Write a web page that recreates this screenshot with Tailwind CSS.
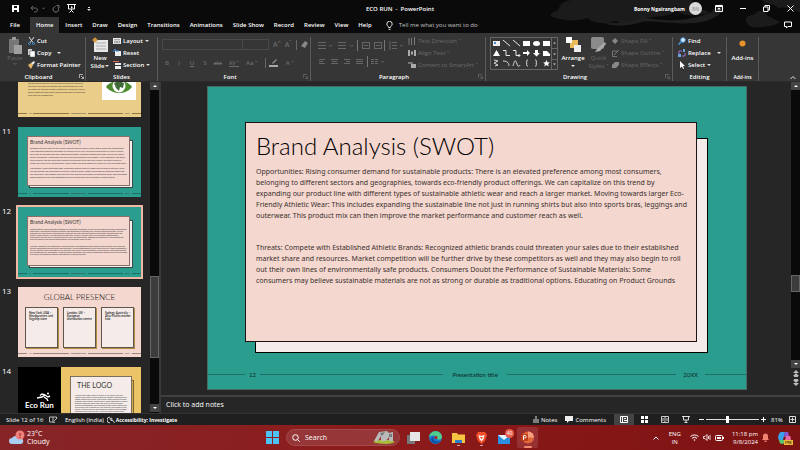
<!DOCTYPE html>
<html lang="en">
<head>
    <meta charset="UTF-8">
    <meta name="viewport" content="width=device-width, initial-scale=1.0">
    <title>ECO RUN - PowerPoint</title>
    <script src="https://cdn.jsdelivr.net/npm/@tailwindcss/browser@4"></script>
</head>
<body class="h-screen flex flex-col overflow-hidden bg-[#262626] text-white text-[6px] leading-[8px] font-semibold font-['Open_Sans',sans-serif]">

    <!-- Title bar and tabs -->
    <header class="relative bg-[#0a0a0a] shrink-0">
        <svg class="absolute right-0 top-0 w-[260px] h-[33px]" viewBox="0 0 260 33" fill="#1b1b1b">
            <path d="M10 16c2-5 8-4 9-8 1-5 8-8 13-8h120c2 8 12 10 18 12-12 5-26 4-34-1-10 8-24 4-34 8-8 6-20 6-26 2-12 4-24 2-28-3-12 4-24 3-38-2z"/>
            <path d="M60 20c12 6 26 2 44-3 20 5 44 5 68-5 3-5 6-8 10-9 6 10-12 20-30 20-20 2-40-4-54 0-14 4-32 4-38-3z" fill="#1f1f1f"/>
            <path d="M206 20c0-6 8-4 10-7 2-4 10-2 12 3l12 6c-6 5-14 4-18 5-8 2-16-1-16-7z"/>
            <path d="M222 0c4 6 12 2 16 8 8-2 14 2 22 4V0z"/>
        </svg>
        <div class="relative flex items-center h-[17px] px-3">
            <div class="flex-1 flex items-center gap-[7px]">
                <button aria-label="Save"><svg class="w-[7px] h-[7px]" viewBox="0 0 7 7"><path d="M0 0h7v7H0z" fill="#fff"/><path d="M2 1h3v2H2zM2 5h3v2H2z" fill="#111"/></svg></button>
                <button aria-label="Undo" class="flex items-center gap-1 ml-1"><svg class="w-2 h-2" viewBox="0 0 8 8" fill="none" stroke="#666"><path d="M3 1L1 3l2 2M1 3h4.500a2 2 0 0 1 0 4H4"/></svg><svg class="w-[3px] h-[3px]" viewBox="0 0 4 4"><path d="M0 1h4L2 3z" fill="#666"/></svg></button>
                <button aria-label="Redo"><svg class="w-2 h-2" viewBox="0 0 8 8" fill="none" stroke="#777"><path d="M6 2.500A2.800 2.800 0 1 1 3.500 1.500M4.500 0.500H7V3"/></svg></button>
                <button aria-label="Start slide show"><svg class="w-[9px] h-[9px]" viewBox="0 0 9 9" fill="none" stroke="#fff"><path d="M0 .5h9M1.500 1v4h6V1M4.500 5v2M2.500 8.500L4.500 6.500l2 2"/><path d="M4 2v2.500L6 3.200z" fill="#fff" stroke="none"/></svg></button>
                <button aria-label="Customize toolbar"><svg class="w-1 h-2 ml-1" viewBox="0 0 4 8" fill="#ddd"><path d="M1 2h2v1H1zM0 4h4L2 6z"/></svg></button>
            </div>
            <h1 class="text-[6px]">ECO RUN &nbsp;-&nbsp; PowerPoint</h1>
            <div class="flex-1 flex items-center justify-end">
                <span class="mr-1 text-[5px] font-bold">Bonny Ngairangbam</span>
                <span class="size-[13px] rounded-full bg-[#dadada] text-[#999] text-[5px] flex items-center justify-center mr-[13px]">BN</span>
                <button aria-label="Ribbon options" class="mr-[17px]"><svg class="w-2 h-[7px]" viewBox="0 0 8 7" fill="none" stroke="#fff"><path d="M.5 .5h7v6h-7zM.5 1.500h7M4 3v2.500M2.500 4.200L4 3l1.500 1.200"/></svg></button>
                <button aria-label="Minimize" class="mr-[17px]"><svg class="w-[6px] h-[7px]" viewBox="0 0 6 7" stroke="#fff"><path d="M0 3.500h6"/></svg></button>
                <button aria-label="Restore" class="mr-[17px]"><svg class="w-[7px] h-[7px]" viewBox="0 0 7 7" fill="none" stroke="#fff"><path d="M.5 2h4.500v4.500H.5zM2 2V.5h4.500V5H5"/></svg></button>
                <button aria-label="Close" class="-mr-[6px]"><svg class="w-[7px] h-[7px]" viewBox="0 0 7 7" stroke="#fff"><path d="M.5 .5l6 6M6.500 .5l-6 6"/></svg></button>
            </div>
        </div>
        <nav class="relative flex items-stretch gap-[2px] h-4 pl-[6px]">
            <button class="px-1">File</button>
            <button class="px-[6px] bg-[#363636] ml-1">Home</button>
            <button class="px-1">Insert</button>
            <button class="px-1">Draw</button>
            <button class="px-1">Design</button>
            <button class="px-1">Transitions</button>
            <button class="px-1">Animations</button>
            <button class="px-1">Slide Show</button>
            <button class="px-1">Record</button>
            <button class="px-1">Review</button>
            <button class="px-1">View</button>
            <button class="px-1">Help</button>
            <button class="px-1 ml-1 flex items-center gap-[6px] text-[#c4c4c4] font-normal">
                <svg class="w-[7px] h-[9px]" viewBox="0 0 7 9" fill="none" stroke="#ddd"><path d="M2.500 6.500C2.500 5 .8 4.800 .8 3a2.700 2.700 0 0 1 5.400 0c0 1.800-1.700 2-1.700 3.500zM2.500 8.300h2"/></svg>
                Tell me what you want to do
            </button>
            <button aria-label="Comments" class="ml-auto mr-[8px]"><svg class="w-[8px] h-[8px]" viewBox="0 0 8 8" fill="none" stroke="#fff"><path d="M.5 1h7v4.500H4L2.500 7V5.500h-2z"/></svg></button>
        </nav>
    </header>

    <!-- Ribbon -->
    <section class="flex shrink-0 h-[49px] bg-[#363636] border-b border-[#2b2b2b] pt-1">
        <div class="w-[86px] border-r border-[#5c5c5c] flex flex-col">
            <div class="flex-1 flex pl-[7px]">
                <button class="w-4 flex flex-col items-center text-[#666] font-normal">
                    <svg class="w-[14px] h-[17px] shrink-0" viewBox="0 0 14 17"><path d="M1 2h10v14H1z" fill="#777"/><path d="M4 0h4v3H4z" fill="#999"/><path d="M6 8h8v9H6z" fill="#a0a0a0"/></svg>
                    Paste
                    <svg class="w-1 h-1" viewBox="0 0 4 4" fill="none" stroke="#666"><path d="M.5 1L2 2.500 3.500 1"/></svg>
                </button>
                <div class="pl-[5px] flex flex-col gap-1">
                    <button class="flex items-center gap-[2px]"><svg class="w-[7px] h-2" viewBox="0 0 7 8" fill="none"><path d="M1 0l4 5.500M6 0L2 5.500" stroke="#ddd"/><circle cx="1.500" cy="6.500" r="1" stroke="#4a9ae0"/><circle cx="5.500" cy="6.500" r="1" stroke="#4a9ae0"/></svg>Cut</button>
                    <button class="flex items-center gap-[2px]"><svg class="w-[7px] h-2" viewBox="0 0 7 8"><path d="M0 0h4v6H0z" fill="#ccc"/><path d="M2 2h5v6H2z" fill="#fff" stroke="#555" stroke-width=".5"/></svg>Copy<svg class="w-1 h-1 ml-1" viewBox="0 0 4 4" fill="#ddd"><path d="M0 1h4L2 3z"/></svg></button>
                    <button class="flex items-center gap-[2px]"><svg class="w-[7px] h-2" viewBox="0 0 7 8"><path d="M0 4l3-2 2 2-2 4z" fill="#e9b96a"/><path d="M3 2l3-2 1 1-2 3z" fill="#eee"/></svg>Format Painter</button>
                </div>
            </div>
            <div class="h-[9px] flex items-center justify-center relative"><span class="pr-[8px]">Clipboard</span>
                <svg class="absolute right-[1px] w-[5px] h-[5px]" viewBox="0 0 5 5" fill="none" stroke="#ccc" stroke-width=".8"><path d="M.5 4V.5H4M2 2l2.500 2.500M4.500 2.500v2h-2"/></svg>
            </div>
        </div>

        <div class="w-[72px] border-r border-[#5c5c5c] flex flex-col">
            <div class="flex-1 flex pl-[4px]">
                <button class="w-5 flex flex-col items-center">
                    <svg class="w-4 h-[16px] shrink-0 mb-px" viewBox="0 0 16 16"><path d="M2 3h14v12H2z" fill="#e8e8e8"/><path d="M4 6h10M4 9h10M4 12h10" stroke="#aaa"/><circle cx="3" cy="3" r="2" fill="#e9a94a"/><path d="M3 0v6M0 3h6" stroke="#c98a35" stroke-width=".8"/></svg>
                    New
                    <span class="flex items-center gap-px">Slide<svg class="w-1 h-1" viewBox="0 0 4 4" fill="#ddd"><path d="M0 1h4L2 3z"/></svg></span>
                </button>
                <div class="pl-[3px] flex flex-col gap-1">
                    <button class="flex items-center gap-[2px]"><svg class="w-2 h-2" viewBox="0 0 8 8"><path d="M0 1h8v6H0z" fill="#eee"/><path d="M1 2.500h6M1.500 4h2v2h-2zM4.500 4h2v2h-2z" fill="none" stroke="#888" stroke-width=".7"/></svg>Layout<svg class="w-1 h-1" viewBox="0 0 4 4" fill="#ddd"><path d="M0 1h4L2 3z"/></svg></button>
                    <button class="flex items-center gap-[2px]"><svg class="w-2 h-2" viewBox="0 0 8 8"><path d="M2 2h6v5H2z" fill="#eee"/><path d="M0 3l2-3 1 2h3" fill="none" stroke="#3f8fe0"/></svg>Reset</button>
                    <button class="flex items-center gap-[2px]"><svg class="w-2 h-2" viewBox="0 0 8 8"><path d="M0 0h6v1H0z" fill="#e06a50"/><path d="M2 2h6v2H2zM2 5h6v3H2z" fill="#eee"/></svg>Section<svg class="w-1 h-1" viewBox="0 0 4 4" fill="#ddd"><path d="M0 1h4L2 3z"/></svg></button>
                </div>
            </div>
            <div class="h-[9px] flex items-center justify-center">Slides</div>
        </div>

        <div class="w-[153px] border-r border-[#5c5c5c] flex flex-col">
            <div class="flex-1 flex flex-col gap-2 pl-[4px] pt-[2px] text-[#6a6a6a]">
                <div class="flex items-center">
                    <input aria-label="Font" class="w-[81px] h-[11px] border border-[#4a4a4a] bg-transparent">
                    <input aria-label="Font size" class="w-[26px] h-[11px] border border-l-0 border-[#4a4a4a] bg-transparent">
                    <button class="pl-1 text-[7px]">A<sup>^</sup></button>
                    <button class="pl-[4px] text-[7px]">A<sup>ˇ</sup></button>
                    <i class="w-px h-[10px] bg-[#666] mx-1"></i>
                    <button aria-label="Clear formatting" class="shrink-0"><svg class="w-[7px] h-2" viewBox="0 0 7 8"><path d="M0 5l4-5 3 2-3 5z" fill="#888"/></svg></button>
                </div>
                <div class="flex items-center gap-[7px] pl-[3px]">
                    <button>B</button><button class="italic pl-[2px]">I</button><button class="underline pl-[3px]">U</button><button class="pl-[2px]">S</button>
                    <button class="line-through text-[5px]">abc</button>
                    <button class="text-[5px] underline">AV ˇ</button>
                    <button>Aa ˇ</button>
                    <i class="w-px h-[10px] bg-[#666]"></i>
                    <button aria-label="Highlight" class="-ml-1"><svg class="w-[10px] h-2" viewBox="0 0 10 8"><path d="M3 4l4-4 1 1-4 4z" fill="#888"/><path d="M0 6h9v2H0z" fill="#aaa"/></svg></button>
                    <button>A ˇ</button>
                </div>
            </div>
            <div class="h-[9px] flex items-center justify-center relative"><span class="pr-[8px]">Font</span>
                <svg class="absolute right-[2px] w-[5px] h-[5px]" viewBox="0 0 5 5" fill="none" stroke="#666" stroke-width=".8"><path d="M.5 4V.5H4M2 2l2.500 2.500M4.500 2.500v2h-2"/></svg>
            </div>
        </div>

        <div class="w-[175px] border-r border-[#5c5c5c] flex flex-col">
            <div class="flex-1 flex pl-[6px]">
                <svg class="w-[91px] h-[32px]" viewBox="0 0 91 32" fill="none" stroke="#666">
                    <path d="M1 5.500h8M1 8.500h8M1 11.500h8M12 8l1.500 1.500L15 8M21 5.500h8M21 8.500h8M21 11.500h8M33 8l1.500 1.500L36 8"/>
                    <path d="M40.500 3v11M67.500 3v11M50.500 19v11" stroke="#777"/>
                    <path d="M45.500 5v7M52.500 5v7M45 5.500h8M45 11.500h8M47 8.500h4M57.500 5v7M64.500 5v7M57 5.500h8M57 11.500h8M59 8.500h4M73 4v9M75 5.500h5M75 8.500h5M75 11.500h5M83 8l1.500 1.500L86 8"/>
                    <path d="M2 22.500h6M2 24.500h4M2 26.500h6M14 22.500h7M15 24.500h5M14 26.500h7M27 22.500h6M29 24.500h4M27 26.500h6M39 22.500h7M39 24.500h7M39 26.500h7M54 22.500h3M54 24.500h3M54 26.500h3M58 22.500h3M58 24.500h3M58 26.500h3M64 24l1.500 1.500L67 24"/>
                </svg>
                <div class="flex flex-col gap-1 text-[#6c6c6c] font-normal whitespace-nowrap">
                    <button class="flex items-center gap-[2px]"><svg class="w-2 h-2" viewBox="0 0 8 8" stroke="#777"><path d="M1 1v7M3.500 1v7M6.500 0v8"/></svg>Text Direction ˇ</button>
                    <button class="flex items-center gap-[2px]"><svg class="w-2 h-2" viewBox="0 0 8 8"><path d="M0 1h2v6H0zM6 1h2v6H6zM3 2.500h2v3H3z" fill="#aaa"/></svg>Align Text ˇ</button>
                    <button class="flex items-center gap-[2px]"><svg class="w-2 h-2" viewBox="0 0 8 8"><path d="M0 1h5v2H0z" fill="#777"/><path d="M3 3h5v4H3z" fill="#aaa"/></svg>Convert to SmartArt ˇ</button>
                </div>
            </div>
            <div class="h-[9px] flex items-center justify-center relative"><span class="pr-[8px]">Paragraph</span>
                <svg class="absolute right-[2px] w-[5px] h-[5px]" viewBox="0 0 5 5" fill="none" stroke="#666" stroke-width=".8"><path d="M.5 4V.5H4M2 2l2.500 2.500M4.500 2.500v2h-2"/></svg>
            </div>
        </div>

        <div class="w-[187px] border-r border-[#5c5c5c] flex flex-col">
            <div class="flex-1 flex pl-[4px]">
                <!-- Shape gallery -->
                <svg class="w-[69px] h-[33px] shrink-0" viewBox="0 0 69 33" fill="none" stroke="#e8e8e8">
                    <path d="M.5 .5h67v32H.5zM61.500 0v33M61 11.500h7M61 22.500h7" stroke="#666"/>
                    <path d="M3 4h7v5H3z" fill="#eee" stroke="none"/><path d="M4 5h2v2H4z" fill="#4a8ad0" stroke="none"/>
                    <path d="M13 3l7 6M23 3l7 6"/>
                    <path d="M33 4h7v5h-7zM53 4h7v5h-7z" fill="#fff" stroke="none"/><ellipse cx="46.500" cy="6.500" rx="3.500" ry="2.500" fill="#fff" stroke="none"/>
                    <path d="M6.500 13l3.500 6H3z" fill="#fff" stroke="none"/>
                    <path d="M13 13.500h3v5h4M23 13.500h3v5h4M28.500 17l1.500 1.500-1.500 1.500" />
                    <path d="M33 15h4v-2l3 3-3 3v-2h-4zM45 13h3v3h2l-3.500 3.500L43 16h2zM53 14h4l3 3v2h-7z" fill="#fff" stroke="none"/>
                    <path d="M4 23l4 1-4 2 4 2-3 1M13 24c3 0 6 1 6 5M23 29c2-8 3-5 4-2s2 3 3 1M38 23c-3 0 0 3-2 3 2 0-1 3 2 3M45 23c3 0 0 3 2 3-2 0 1 3-2 3" stroke-width=".9"/>
                    <path d="M56.500 23l1 2.200 2.400.2-1.800 1.600.6 2.400-2.200-1.300-2.200 1.300.6-2.400-1.800-1.600 2.400-.2z" fill="#fff" stroke="none"/>
                    <path d="M63 6.500h3l-1.500-1.500zM63 16.500h3l-1.500 1.500zM63 26.500h3l-1.500 1.500z" fill="#ccc" stroke="none"/>
                </svg>
                <button class="w-[28px] flex flex-col items-center">
                    <svg class="w-[15px] h-[15px] shrink-0" viewBox="0 0 15 15"><path d="M4 3h8v8H4z" fill="#e9b95a"/><path d="M0 0h6v6H0z" fill="#fff"/><path d="M8 8h7v7H8z" fill="#eee"/></svg>
                    <span class="mt-[2px]">Arrange</span>
                    <svg class="w-1 h-1 mt-[2px]" viewBox="0 0 4 4" fill="#eee"><path d="M0 1h4L2 3z"/></svg>
                </button>
                <button class="w-[23px] flex flex-col items-center text-[#686868] font-normal whitespace-nowrap">
                    <svg class="w-4 h-[15px] shrink-0" viewBox="0 0 16 15"><rect width="13" height="12" rx="2" fill="#8a8a8a"/><path d="M6 12l8-7 1 2-6 7-5 1z" fill="#aaa"/></svg>
                    <span class="mt-[2px]">Quick</span><span>Styles ˇ</span>
                </button>
                <div class="pl-[2px] flex flex-col gap-1 text-[#686868] font-normal whitespace-nowrap">
                    <button class="flex items-center gap-[2px]"><svg class="w-[7px] h-2" viewBox="0 0 7 8"><path d="M0 4l3-3 3 3-3 3z" fill="#888"/></svg>Shape Fill ˇ</button>
                    <button class="flex items-center gap-[2px]"><svg class="w-[7px] h-2" viewBox="0 0 7 8" fill="none" stroke="#777"><path d="M5 2H.5v5.500H5M2 6l5-5"/></svg>Shape Outline ˇ</button>
                    <button class="flex items-center gap-[2px]"><svg class="w-[7px] h-2" viewBox="0 0 7 8"><path d="M0 4l3-3h4v3L4 7H0z" fill="#888"/></svg>Shape Effects ˇ</button>
                </div>
            </div>
            <div class="h-[9px] flex items-center justify-center relative"><span class="pr-[8px]">Drawing</span>
                <svg class="absolute right-[2px] w-[5px] h-[5px]" viewBox="0 0 5 5" fill="none" stroke="#666" stroke-width=".8"><path d="M.5 4V.5H4M2 2l2.500 2.500M4.500 2.500v2h-2"/></svg>
            </div>
        </div>

        <div class="w-[54px] border-r border-[#5c5c5c] flex flex-col">
            <div class="flex-1 flex flex-col gap-1 pl-[5px]">
                <button class="flex items-center gap-[2px]"><svg class="w-2 h-2" viewBox="0 0 8 8" fill="none"><circle cx="5" cy="3" r="2.300" fill="#dceeff" stroke="#4a9ae0"/><path d="M3.300 4.700L.5 7.500" stroke="#4a9ae0" stroke-width="1.500"/></svg>Find</button>
                <button class="flex items-center gap-[2px]"><svg class="w-2 h-2" viewBox="0 0 8 8" fill="none"><path d="M1 5V2h3M7 4v3H4" stroke="#a070c8"/><path d="M5 0h2v3H5zM0 5h3v3H0z" fill="#6aa5e0"/></svg>Replace<svg class="w-1 h-1 ml-1" viewBox="0 0 4 4" fill="#ddd"><path d="M0 1h4L2 3z"/></svg></button>
                <button class="flex items-center gap-[2px]"><svg class="w-2 h-2" viewBox="0 0 8 8"><path d="M2 0l5 5H5l1 2.500-1 .5-1-2.500L2 7z" fill="#fff"/></svg>Select<svg class="w-1 h-1" viewBox="0 0 4 4" fill="#ddd"><path d="M0 1h4L2 3z"/></svg></button>
            </div>
            <div class="h-[9px] flex items-center justify-center">Editing</div>
        </div>

        <div class="w-[32px] border-r border-[#5c5c5c] flex flex-col items-center">
            <button class="flex-1 flex flex-col items-center gap-[7px] pt-[3px]">
                <svg class="w-[7px] h-[7px]" viewBox="0 0 7 7"><circle cx="3.500" cy="3.500" r="3" fill="#e8912a"/></svg>
                Add-ins
            </button>
            <div class="h-[9px] flex items-center text-[5px]">Add-ins</div>
        </div>
        <button aria-label="Collapse ribbon" class="ml-auto mr-1 mb-px self-end"><svg class="w-[6px] h-[5px]" viewBox="0 0 6 5" fill="none" stroke="#ddd"><path d="M.5 4L3 1.500 5.500 4"/></svg></button>
    </section>

    <div class="flex-1 min-h-0 flex">
        <!-- Thumbnails -->
        <aside class="w-[161px] shrink-0 flex border-r-2 border-[#3a3a3a]">
            <ol class="flex-1 min-w-0 flex flex-col gap-[10px] overflow-hidden font-['Lato',sans-serif] text-[#333] font-normal">
                <li class="flex h-[35px] shrink-0 items-end pl-[18px]">
                    <div class="w-[123px] h-[35px] bg-[#e9cd88] flex flex-col">
                        <div class="flex-1 flex justify-between pl-[10px] pr-[5px]">
                            <p class="w-[58px] text-[2px] leading-[3px]">and the idea driving every pair of shoes we make for runners in the world. Our shoes are sourced from recycled materials, with low water use and clean energy, so that every runner may leave a smaller footprint on the planet. Eco Run gives back to nature with each and every product sold.</p>
                            <svg class="w-[34px] h-[18px]" viewBox="0 0 34 18"><path d="M0 0h34v18H0z" fill="#fff"/><path d="M4 5C9-3 25-3 30 5c-6 8-19 8-26 0z" fill="#4b8a2c"/><circle cx="17" cy="4" r="6.500" fill="#fff"/><path d="M12 1l5-2 5 2-1 5-3-1-1 4-3-3z" fill="#3f6b38"/></svg>
                        </div>
                        <div class="flex items-center gap-[2px] h-2 text-[2px] leading-[2px]"><i class="w-[9px] h-px bg-[#8f7a3f]"></i>10<i class="flex-1 h-px bg-[#8f7a3f]"></i>Presentation title<i class="flex-1 h-px bg-[#8f7a3f]"></i>20XX<i class="w-[9px] h-px bg-[#8f7a3f]"></i></div>
                    </div>
                </li>
                <li class="flex shrink-0">
                    <span class="w-[18px] pl-[2px] text-white text-[8px] leading-[8px] font-['Open_Sans',sans-serif]">11</span>
                    <div class="w-[123px] h-[70px] bg-[#2b9d8f] flex flex-col">
                        <div class="relative isolate ml-[9px] mr-[11px] mt-[9px] h-[50px]">
                            <div class="absolute -z-10 left-[2px] -right-[3px] top-1 -bottom-[2px] bg-[#f5ece9] border border-[#3a4a48]"></div>
                            <div class="h-full bg-[#f4d7cf] border border-[#8a6f6a] px-[2px] pt-px">
                                <h3 class="text-[5px] leading-[8px]">Brand Analysis (SWOT)</h3>
                                <p class="text-[2px] leading-[3px] pt-px">Strengths: Diverse variety of eco-friendly products: Eco Run offers a wide range of shoes and clothing made from sustainable materials that appeal to runners of every level. The brand keeps prices fair while it follows strict rules on sourcing and waste. Strong brand identity: customers associate the name with care for nature, quality and comfort. Partnerships with local clubs and events give the company a loyal community and steady word of mouth, and the online store reaches new markets at low cost every season. The team is skilled in design and in the use of recycled fibres, natural rubber and plant based dyes, which few rivals can match today.</p>
                                <p class="text-[2px] leading-[3px] pt-[2px]">Weaknesses: Higher production costs: Sustainable materials and fair wages raise the cost of each pair, which can limit margins and keep some buyers away from the brand. Limited retail presence: most sales come from the online store, and shoppers who wish to try the shoes on may choose an established brand. Small marketing budget compared with large competitors makes it hard to reach new customers in distant regions.</p>
                            </div>
                        </div>
                        <div class="mt-auto mb-[3px] flex items-center gap-[2px] text-[2px] leading-[2px]"><i class="w-[9px] h-px bg-[#1c7067]"></i>11<i class="flex-1 h-px bg-[#1c7067]"></i>Presentation title<i class="flex-1 h-px bg-[#1c7067]"></i>20XX<i class="w-[9px] h-px bg-[#1c7067]"></i></div>
                    </div>
                </li>
                <li class="flex shrink-0">
                    <span class="w-[18px] pl-[2px] text-white text-[8px] leading-[8px] font-['Open_Sans',sans-serif]">12</span>
                    <div class="w-[123px] h-[70px] bg-[#2b9d8f] outline-2 outline-[#f0b8a4] flex flex-col">
                        <div class="relative isolate ml-[9px] mr-[11px] mt-[9px] h-[50px]">
                            <div class="absolute -z-10 left-[2px] -right-[3px] top-1 -bottom-[2px] bg-[#f5ece9] border border-[#3a4a48]"></div>
                            <div class="h-full bg-[#f4d7cf] border border-[#8a6f6a] px-[2px] pt-px">
                                <h3 class="text-[5px] leading-[8px]">Brand Analysis (SWOT)</h3>
                                <p class="text-[2px] leading-[2px] pt-[2px]">Opportunities: Rising consumer demand for sustainable products: There is an elevated preference among most consumers, belonging to different sectors and geographies, towards eco-friendly product offerings. We can capitalize on this trend by expanding our product line with different types of sustainable athletic wear and reach a larger market. Moving towards larger Eco-Friendly Athletic Wear: This includes expanding the sustainable line not just in running shirts but also into sports bras, leggings and outerwear. This product mix can then improve the market performance and customer reach as well.</p>
                                <p class="text-[2px] leading-[2px] pt-[5px]">Threats: Compete with Established Athletic Brands: Recognized athletic brands could threaten your sales due to their established market share and resources. Market competition will be further drive by these competitors as well and they may also begin to roll out their own lines of environmentally safe products. Consumers Doubt the Performance of Sustainable Materials: Some consumers may believe sustainable materials are not as strong or durable as traditional options. Educating on Product Grounds</p>
                            </div>
                        </div>
                        <div class="mt-auto mb-[3px] flex items-center gap-[2px] text-[2px] leading-[2px]"><i class="w-[9px] h-px bg-[#1c7067]"></i>12<i class="flex-1 h-px bg-[#1c7067]"></i>Presentation title<i class="flex-1 h-px bg-[#1c7067]"></i>20XX<i class="w-[9px] h-px bg-[#1c7067]"></i></div>
                    </div>
                </li>
                <li class="flex shrink-0">
                    <span class="w-[18px] pl-[2px] text-white text-[8px] leading-[8px] font-['Open_Sans',sans-serif]">13</span>
                    <div class="w-[123px] h-[70px] bg-[#f4d7cf] flex flex-col">
                        <h3 class="text-center text-[8px] leading-[10px] pt-[5px] font-light text-black">GLOBAL PRESENCE</h3>
                        <div class="mt-[5px] px-[7px] grid grid-cols-3 gap-[5px] text-[3px] leading-[3px] font-bold">
                            <div class="h-[41px] bg-[#f5ece9] border border-[#5e554d] shadow-[1px_1px_0_#b08f45] pl-[3px] pt-1">New York, USA – Headquarters and flagship store</div>
                            <div class="h-[41px] bg-[#f5ece9] border border-[#5e554d] shadow-[1px_1px_0_#b08f45] pl-[3px] pt-1">London, UK – European distribution centre</div>
                            <div class="h-[41px] bg-[#f5ece9] border border-[#5e554d] shadow-[1px_1px_0_#b08f45] pl-[3px] pt-1">Sydney, Australia – Asia-Pacific market hub</div>
                        </div>
                        <div class="mt-auto mb-[3px] flex items-center gap-[2px] text-[2px] leading-[2px]"><i class="w-[9px] h-px bg-[#9b8883]"></i>13<i class="flex-1 h-px bg-[#9b8883]"></i>Presentation title<i class="flex-1 h-px bg-[#9b8883]"></i>20XX<i class="w-[9px] h-px bg-[#9b8883]"></i></div>
                    </div>
                </li>
                <li class="flex shrink-0">
                    <span class="w-[18px] pl-[2px] text-white text-[8px] leading-[8px] font-['Open_Sans',sans-serif]">14</span>
                    <div class="w-[123px] h-[70px] bg-[#ecc468] flex">
                        <div class="w-[43px] bg-black text-white text-[8px] leading-[8px] font-bold text-center pt-[25px]">
                            <svg class="w-[16px] h-[9px] ml-[18px]" viewBox="0 0 16 9" fill="none" stroke="#fff" stroke-width="1.400"><circle cx="12" cy="1.500" r="1" fill="#fff" stroke="none"/><path d="M1 6l5-1 3-2 3 2 2-1M9 3L6 2 4 3.500M8 5l3 2 1 2"/></svg>
                            <span class="block">Eco Run</span>
                        </div>
                        <div class="relative isolate flex-1 ml-[9px] mr-[9px] mt-[9px] h-[54px]">
                            <div class="absolute -z-10 left-[2px] -right-[2px] top-1 -bottom-[2px] bg-[#d7ab4d] border border-[#7c6533]"></div>
                            <div class="h-full bg-[#f5ece9] border border-[#7c6f5c] pl-1 pr-[3px] pt-1">
                                <h3 class="text-[7px] leading-[9px] pl-[2px]">THE LOGO</h3>
                                <p class="text-[2px] leading-[2px] pt-[4px]">The Eco Run logo shows a runner in full stride over the name of the brand, which stands for motion, freedom and a lighter step on the earth. The runner leans forward to show progress and energy, and the plain white lettering on a black ground keeps the mark bold and easy to read on shoes, shirts and packaging. The rounded shapes recall nature and the circular use of materials. The logo can be printed in one colour, which saves ink and keeps the waste of the printing process as low as it can be. It works at small sizes and on screens, and it is the same in every market in which the company sells its products, so that customers know it at once wherever they happen to run.</p>
                            </div>
                        </div>
                    </div>
                </li>
            </ol>
            <div class="w-[9px] bg-[#0a0a0a] flex flex-col">
                <button aria-label="Scroll up" class="h-2 bg-[#444] flex items-center justify-center"><svg class="w-1 h-1" viewBox="0 0 4 4" fill="#fff"><path d="M0 3h4L2 1z"/></svg></button>
                <div class="mt-[186px] h-[82px] bg-[#3c3c3c] border border-[#666]"></div>
                <button aria-label="Scroll down" class="mt-auto h-2 bg-[#444] mb-px flex items-center justify-center"><svg class="w-1 h-1" viewBox="0 0 4 4" fill="#fff"><path d="M0 1h4L2 3z"/></svg></button>
            </div>
        </aside>

        <main class="flex-1 min-w-0 flex flex-col">
            <div class="flex">
                <div class="flex-1 min-w-0 pl-[46px] pr-[44px] pt-1 pb-[5px]">
                    <!-- Current slide -->
                    <article class="aspect-video bg-[#2b9d8f] text-black flex flex-col border border-[#4a6a66]">
                        <div class="relative isolate ml-[37px] mr-[49px] mt-[35px] h-[220px]">
                            <div class="absolute -z-10 left-[10px] -right-[11px] top-4 -bottom-[11px] bg-[#f5ece9] border border-black"></div>
                            <div class="h-full bg-[#f4d7cf] border border-[#1c1412] pl-[10px] pt-2">
                                <h2 class="text-[24px] leading-[30px] font-light font-['Lato',sans-serif]">Brand Analysis (SWOT)</h2>
                                <div class="pt-[5px] text-[7px] leading-[11px] font-normal text-[#3a302e] whitespace-nowrap font-['Noto_Sans','Open_Sans',sans-serif]">
                                    <p>Opportunities: Rising consumer demand for sustainable products: There is an elevated preference among most consumers,<br>belonging to different sectors and geographies, towards eco-friendly product offerings. We can capitalize on this trend by<br>expanding our product line with different types of sustainable athletic wear and reach a larger market. Moving towards larger Eco-<br>Friendly Athletic Wear: This includes expanding the sustainable line not just in running shirts but also into sports bras, leggings and<br>outerwear. This product mix can then improve the market performance and customer reach as well.</p>
                                    <p class="pt-[21px]">Threats: Compete with Established Athletic Brands: Recognized athletic brands could threaten your sales due to their established<br>market share and resources. Market competition will be further drive by these competitors as well and they may also begin to roll<br>out their own lines of environmentally safe products. Consumers Doubt the Performance of Sustainable Materials: Some<br>consumers may believe sustainable materials are not as strong or durable as traditional options. Educating on Product Grounds</p>
                                </div>
                            </div>
                        </div>
                        <footer class="mt-auto mb-[10px] flex items-center text-[6px] leading-[8px] font-normal font-['Lato',sans-serif] text-[#0c2b28]">
                            <i class="w-[37px] h-px bg-[#1c7067]"></i><span class="px-1">12</span>
                            <i class="flex-[13] h-px bg-[#1c7067]"></i><span class="px-[9px]">Presentation title</span>
                            <i class="flex-[12] h-px bg-[#1c7067]"></i><span class="px-[7px]">20XX</span><i class="w-[41px] h-px bg-[#1c7067]"></i>
                        </footer>
                    </article>
                </div>
                <div class="w-[9px] shrink-0 bg-[#0a0a0a] flex flex-col items-stretch">
                    <button aria-label="Previous" class="h-2 bg-[#444] flex items-center justify-center"><svg class="w-1 h-1" viewBox="0 0 4 4" fill="#fff"><path d="M0 3h4L2 1z"/></svg></button>
                    <div class="mt-[185px] h-[17px] bg-[#3c3c3c] border border-[#666]"></div>
                    <button aria-label="Next" class="mt-auto h-2 bg-[#444] flex items-center justify-center"><svg class="w-1 h-1" viewBox="0 0 4 4" fill="#fff"><path d="M0 1h4L2 3z"/></svg></button>
                    <div class="h-[27px] bg-[#262626] flex justify-center pt-[2px]"><svg class="w-[6px] h-[16px]" viewBox="0 0 6 16" fill="#bbb"><path d="M0 3h6L3 0zM0 6h6L3 3zM1 6h4v1H1zM0 10h6l-3 3zM0 13h6l-3 3zM1 9h4v1H1z"/></svg></div>
                </div>
            </div>
            <section class="flex-1 border-t-2 border-[#404040] pl-[5px] pt-[3px] text-[7px] leading-[10px] font-medium">Click to add notes</section>
        </main>
    </div>

    <!-- Status bar -->
    <footer class="h-3 shrink-0 bg-[#1f1f1f] border-t border-[#333] flex items-center pl-[6px] pr-1 text-[6px] font-medium">
        <span class="w-[43px]">Slide 12 of 16</span>
        <svg class="w-2 h-[7px] mr-2" viewBox="0 0 8 7" fill="none" stroke="#ddd" stroke-width=".8"><path d="M4 1v5.500M4 1H.5v5H4l2 .5M4 1h3.500v2M5 5l2.500-2.500"/></svg>
        <span class="mr-[3px]">English (India)</span>
        <svg class="w-2 h-2 mr-px" viewBox="0 0 8 8" fill="none" stroke="#ddd" stroke-width=".9"><path d="M3 1a3 3 0 0 0 0 6M4 1.500v3h2L7.500 7M2.500 3h3"/></svg>
        <button class="font-bold text-[5px]">Accessibility: Investigate</button>
        <div class="ml-auto flex items-center">
            <button class="flex items-center gap-[2px]"><svg class="w-[6px] h-[7px]" viewBox="0 0 6 7" fill="none" stroke="#ddd"><path d="M0 4h6M0 6h6M3 0v3"/></svg>Notes</button>
            <button class="flex items-center gap-[2px] ml-2"><svg class="w-2 h-[7px]" viewBox="0 0 8 7" fill="#eee"><path d="M0 0h8v5H4L2 7V5H0z"/></svg>Comments</button>
            <button aria-label="Normal view" class="ml-2 w-5 h-[11px] bg-[#444] flex items-center justify-center"><svg class="w-2 h-[7px]" viewBox="0 0 8 7" fill="none" stroke="#fff"><path d="M.5 .5h7v6h-7zM2.500 0v7M4 2.500h2M4 4.500h3"/></svg></button>
            <button aria-label="Slide sorter" class="ml-[7px]"><svg class="w-[7px] h-[7px]" viewBox="0 0 7 7" fill="#fff"><path d="M0 0h3v3H0zM4 0h3v3H4zM0 4h3v3H0zM4 4h3v3H4z"/></svg></button>
            <button aria-label="Reading view" class="ml-[13px]"><svg class="w-2 h-[7px]" viewBox="0 0 8 7" fill="none" stroke="#ddd" stroke-width=".9"><path d="M.5 .5H4v6H.5zM4 .5h3.500v6H4M2 2v3M6 2v3"/></svg></button>
            <button aria-label="Slide show" class="ml-[13px]"><svg class="w-2 h-[7px]" viewBox="0 0 8 7" fill="none" stroke="#ddd"><path d="M0 .5h8M1.500 1v3h5V1M4 4v3M2.500 6.500h3"/></svg></button>
            <button aria-label="Zoom out" class="ml-[9px]"><svg class="w-[5px] h-[5px]" viewBox="0 0 5 5" stroke="#fff"><path d="M0 2.500h5"/></svg></button>
            <input type="range" aria-label="Zoom" min="10" max="152" value="66" class="appearance-none w-[53px] h-px mx-[2px] bg-[#ddd] [&::-webkit-slider-thumb]:appearance-none [&::-webkit-slider-thumb]:w-[3px] [&::-webkit-slider-thumb]:h-[7px] [&::-webkit-slider-thumb]:bg-white">
            <button aria-label="Zoom in"><svg class="w-[5px] h-[5px]" viewBox="0 0 5 5" stroke="#fff"><path d="M0 2.500h5M2.500 0v5"/></svg></button>
            <span class="ml-[5px] w-[18px]">81%</span>
            <button aria-label="Fit slide"><svg class="w-[7px] h-[7px]" viewBox="0 0 7 7" fill="none" stroke="#ddd"><path d="M.5 .5h6v6h-6zM3.500 1.500v4M1.500 3.500h4"/></svg></button>
        </div>
    </footer>

    <!-- Taskbar -->
    <footer class="h-[25px] shrink-0 bg-linear-to-r from-[#862528] via-[#8c1a1a] to-[#7c1212] flex items-center text-[7px] leading-[8px] font-normal">
        <button class="flex-1 flex items-center gap-[2px] pl-[9px] text-left">
            <svg class="w-4 h-4" viewBox="0 0 16 16"><path d="M3 14a3 3 0 0 1 0-6 4 4 0 0 1 7 0 3 3 0 0 1 2 6z" fill="#a9cdf0"/><circle cx="11" cy="5" r="4.500" fill="#f0807c"/><path d="M11 3v3M11 7v1" stroke="#802020"/></svg>
            <span>23°C<br>Cloudy</span>
        </button>
        <div class="flex items-center pl-1">
            <button aria-label="Start"><svg class="w-[13px] h-[13px]" viewBox="0 0 13 13" fill="#4cc2f5"><path d="M0 0h6v6H0zM7 0h6v6H7zM0 7h6v6H0zM7 7h6v6H7z"/></svg></button>
            <label class="ml-[7px] w-[114px] h-[17px] rounded-full bg-[#963638] border border-[#a54a4b] flex items-center gap-[5px] pl-[5px] pr-1">
                <svg class="w-2 h-2 shrink-0" viewBox="0 0 8 8" fill="none" stroke="#fff"><circle cx="3.500" cy="3.500" r="2.800"/><path d="M5.500 5.500L7.700 7.700"/></svg>
                <input aria-label="Search" placeholder="Search" class="flex-1 min-w-0 bg-transparent placeholder:text-white">
                <svg class="w-[23px] h-[13px] shrink-0" viewBox="0 0 23 13"><path d="M1 11c5-3 18-3 22 0-4 3-18 2-22 0z" fill="#a9bd3c"/><path d="M2 10L7 1l8-1 2 2 4-1v9h-4V6l-3 4H9V5L6 10z" fill="#b9b9b9"/><path d="M8 2l5-1-3 4zM17 3h3v3h-3z" fill="#777"/></svg>
            </label>
            <button aria-label="Task view" class="ml-[7px]"><svg class="w-[13px] h-3" viewBox="0 0 13 12"><path d="M0 3h8v9H0z" fill="#777"/><path d="M3 0h10v9H3z" fill="#e6e6e6"/></svg></button>
            <button aria-label="Edge" class="ml-[9px]"><svg class="w-[13px] h-[13px]" viewBox="0 0 13 13"><circle cx="6.500" cy="6.500" r="6.500" fill="#1d79cf"/><path d="M0 6C1-1 12-2 13 6c0 3-4 3-5 2 1-3-3-5-8-2z" fill="#4fcf8c"/><path d="M5 6c-2 3 1 6 6 4-2 3-8 3-9-1 0-2 1-3 3-3z" fill="#0e4f9c"/><circle cx="7" cy="6.500" r="1.500" fill="#b4202a"/></svg></button>
            <button aria-label="File Explorer" class="ml-[10px] flex flex-col items-center gap-px pt-[3px]"><svg class="w-[13px] h-3" viewBox="0 0 13 12"><path d="M0 1h5l1 1.500h7V11H0z" fill="#f5c542"/><path d="M3 8h7v3H3z" fill="#2d7fd0"/></svg><i class="w-[3px] h-px bg-[#d9a0a0]"></i></button>
            <button aria-label="Brave" class="ml-[11px] flex flex-col items-center gap-px pt-[3px]"><svg class="w-[11px] h-3" viewBox="0 0 11 12"><path d="M2 0h7l2 3-2 6-3.500 3L2 9 0 3z" fill="#f2502a"/><path d="M2.500 3L5.500 4l3-1-1 4-2 2.500-2-2.500z" fill="#fff"/><path d="M4 5h3L5.500 7.500z" fill="#f2502a"/></svg><i class="w-[3px] h-px bg-[#d9a0a0]"></i></button>
            <button aria-label="Mail" class="relative ml-[11px]"><svg class="w-3 h-3" viewBox="0 0 12 12"><path d="M0 3h12v9H0z" fill="#2a8fe0"/><path d="M0 3l6 5 6-5" fill="#e8f4ff"/></svg><span class="absolute -top-[3px] -right-[4px] size-[9px] rounded-full bg-[#e8604c] text-[5px] leading-[9px] text-center">40</span></button>
            <button aria-label="PowerPoint" class="ml-[7px] w-[21px] h-[21px] rounded-xs bg-[#973033] flex flex-col items-center justify-end gap-[2px]"><svg class="w-[13px] h-[13px]" viewBox="0 0 13 13"><circle cx="7" cy="6.500" r="6" fill="#e2683c"/><path d="M7 .5a6 6 0 0 1 6 6H7z" fill="#f7a07e"/><rect y="3" width="7" height="7" rx="1" fill="#bd3e18"/><path d="M2.500 9V4.500h1.500a1.200 1.200 0 0 1 0 2.400H2.500" fill="none" stroke="#fff" stroke-width=".9"/></svg><i class="w-2 h-[2px] rounded-full bg-[#f08a70]"></i></button>
        </div>
        <div class="flex-1 flex items-center justify-end pr-[9px] text-[6px] font-medium">
            <button aria-label="Hidden icons" class="mr-[10px]"><svg class="w-[6px] h-1" viewBox="0 0 6 4" fill="none" stroke="#fff"><path d="M.5 3.500L3 1l2.500 2.500"/></svg></button>
            <button class="text-center mr-[9px]">ENG<br>IN</button>
            <svg class="w-[9px] h-[7px] mr-1" viewBox="0 0 9 7" fill="none" stroke="#fff"><path d="M.5 2.500a6 6 0 0 1 8 0M2 4.300a3.800 3.800 0 0 1 5 0"/><circle cx="4.500" cy="6" r=".8" fill="#fff" stroke="none"/></svg>
            <svg class="w-2 h-[7px] mr-[4px]" viewBox="0 0 8 7" fill="none" stroke="#fff" stroke-width=".8"><path d="M.5 2.500H2l2-2v6l-2-2H.5zM5.500 2v3M7 1v5"/></svg>
            <svg class="w-[9px] h-[6px] mr-2" viewBox="0 0 9 6"><rect x=".5" y=".5" width="7" height="5" rx="1" fill="none" stroke="#fff"/><path d="M2 2h4v2H2zM8 2h1v2H8z" fill="#fff"/></svg>
            <span class="text-right mr-1">11:18 pm<br>9/8/2024</span>
            <button aria-label="Notifications" class="mr-[9px]"><svg class="w-[7px] h-[9px]" viewBox="0 0 7 9" fill="#f08070"><path d="M0 7l1-1.500V3a2.500 2.500 0 0 1 5 0v2.500L7 7zM2.500 7.500h2V9h-2z"/></svg></button>
            <button aria-label="Copilot" class="relative"><svg class="w-[13px] h-3" viewBox="0 0 13 12"><path d="M3 0h4L5 8H1C-1 6 1 0 3 0z" fill="#3aa0e8"/><path d="M7 0h3l1 4-5 1z" fill="#8a5ad8"/><path d="M8 4h4c2 2 0 8-2 8H6z" fill="#e86aa0"/><path d="M1 8h5l1 3-3 1C2 12 1 10 1 8z" fill="#5cc46a"/></svg><span class="absolute -bottom-px -right-[2px] bg-[#f0b93c] text-black text-[4px] leading-[5px] px-px">PRE</span></button>
        </div>
    </footer>
</body>
</html>
